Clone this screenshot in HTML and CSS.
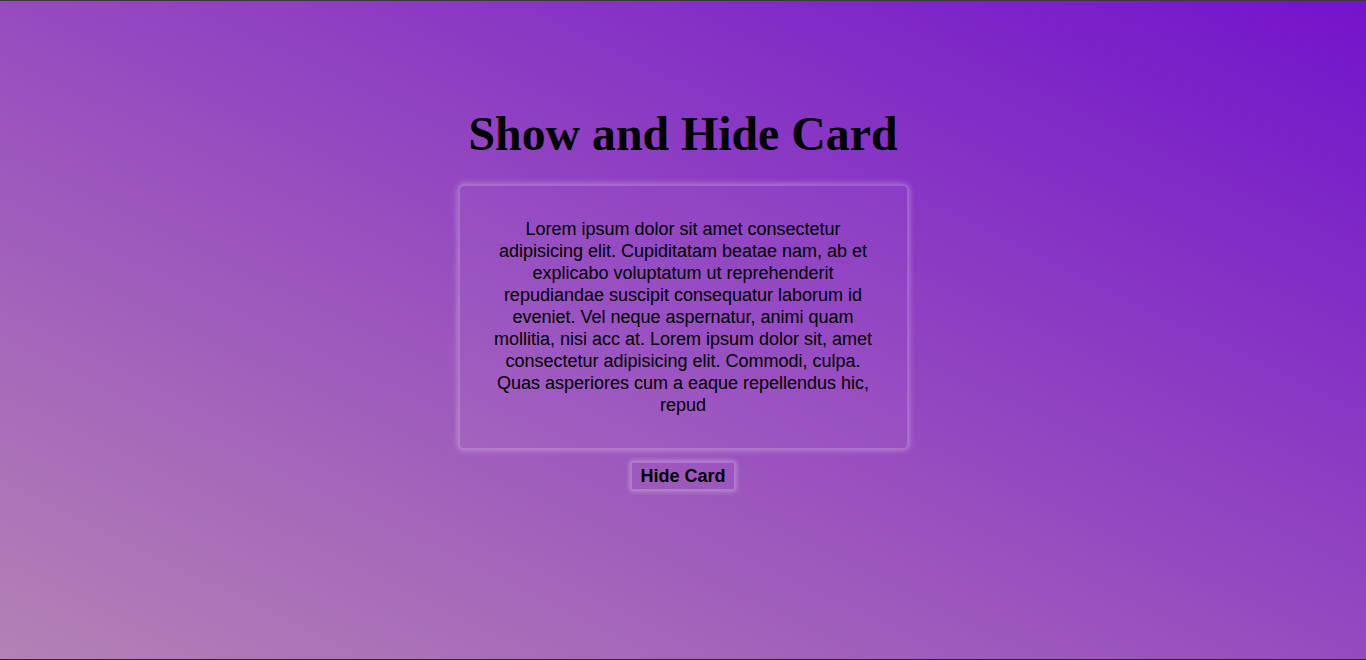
FILE: index.html
```html
<!DOCTYPE html>
<html lang="en">
<head>
<meta charset="utf-8">
<title>Show and Hide Card</title>
<link rel="stylesheet" href="styles.css">
</head>
<body>
<main class="page">
  <h1 class="title">Show and Hide Card</h1>
  <div class="card">
    <p class="card-text">Lorem ipsum dolor sit amet consectetur adipisicing elit. Cupiditatam beatae nam, ab et explicabo voluptatum ut reprehenderit repudiandae suscipit consequatur laborum id eveniet. Vel neque aspernatur, animi quam mollitia, nisi acc at. Lorem ipsum dolor sit, amet consectetur adipisicing elit. Commodi, culpa. Quas asperiores cum a eaque repellendus hic, repud</p>
  </div>
  <button class="toggle">Hide Card</button>
</main>
</body>
</html>
```

FILE: styles.css
```css
html, body {
  margin: 0;
  height: 100%;
}
body {
  box-sizing: border-box;
  border-top: 1px solid #3b3b3b;
  border-bottom: 1px solid #2a2a35;
  background: linear-gradient(to top right, #b482b5 0%, #9c56bd 40%, #7214cb 100%);
  font-family: "Liberation Sans", Arial, sans-serif;
  overflow: hidden;
}
.page {
  display: flex;
  flex-direction: column;
  align-items: center;
  padding-top: 105px;
}
.title {
  margin: 0 0 23px;
  font-family: "Liberation Serif", "Times New Roman", serif;
  font-size: 47.8px;
  font-weight: bold;
  line-height: 55px;
  color: #000;
}
.card {
  box-sizing: border-box;
  width: 451px;
  padding: 32px 33px;
  border: 2px solid rgba(255, 255, 255, 0.18);
  border-radius: 6px;
  background: rgba(255, 255, 255, 0.03);
  box-shadow: 0 0 6px rgba(255, 255, 255, 0.35);
}
.card-text {
  margin: 0;
  text-align: center;
  font-size: 18px;
  line-height: 22px;
  color: #000;
}
.toggle {
  margin-top: 11px;
  padding: 3px 8px;
  height: 30px;
  font-family: "Liberation Sans", Arial, sans-serif;
  font-size: 18px;
  font-weight: bold;
  color: #000;
  background: transparent;
  border: 2px solid rgba(255, 255, 255, 0.2);
  border-radius: 3px;
  box-shadow: 0 0 5px rgba(255, 255, 255, 0.4);
  cursor: pointer;
}
```
